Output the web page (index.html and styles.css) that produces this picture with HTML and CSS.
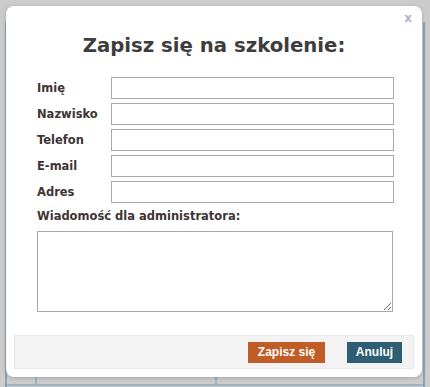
FILE: index.html
```html
<!DOCTYPE html>
<html lang="pl">
<head>
  <meta charset="UTF-8" />
  <title>Zapisz się na szkolenie</title>
  <meta name="viewport" content="width=device-width, initial-scale=1.0" />
  <link rel="stylesheet" href="styles.css">
</head>
<body>
  <div class="frame">
    <div class="table-row">
      <div class="cell"></div>
      <div class="cell"></div>
      <div class="cell"></div>
    </div>
  </div>

  <div class="modal">
    <span class="close">x</span>
    <h1>Zapisz się na szkolenie:</h1>
    <form id="signupForm">
      <div class="row">
        <label for="name">Imię</label>
        <input type="text" id="name" autofocus />
      </div>
      <div class="row">
        <label for="surname">Nazwisko</label>
        <input type="text" id="surname" />
      </div>
      <div class="row">
        <label for="phone">Telefon</label>
        <input type="text" id="phone" />
      </div>
      <div class="row">
        <label for="email">E-mail</label>
        <input type="text" id="email" />
      </div>
      <div class="row">
        <label for="address">Adres</label>
        <input type="text" id="address" />
      </div>
      <label for="message" class="wide">Wiadomość dla administratora:</label>
      <textarea id="message"></textarea>
    </form>
    <div class="footer">
      <button type="submit" form="signupForm" class="save">Zapisz się</button>
      <button type="button" class="cancel">Anuluj</button>
    </div>
  </div>
</body>
</html>
```

FILE: styles.css
```css
body {
  margin: 0;
  background: #cccccc;
  font-family: "DejaVu Sans", Verdana, sans-serif;
  overflow: hidden;
}

.frame {
  margin: 22px 0 0 5px;
  width: 416px;
  height: 365px;
  border-left: 2px solid #87a3b8;
  border-right: 2px solid #87a3b8;
  display: flex;
  flex-direction: column;
  justify-content: flex-end;
}

.table-row {
  display: grid;
  grid-template-columns: 30px 180px 1fr;
  height: 7px;
  border-bottom: 2px solid #9ab4c2;
  margin-bottom: 1px;
}

.cell {
  border-right: 2px solid #9ab4c2;
}

.cell:last-child {
  border-right: none;
}

.modal {
  position: absolute;
  left: 6px;
  top: 6px;
  width: 416px;
  height: 371px;
  box-sizing: border-box;
  background: #ffffff;
  border-radius: 8px;
  box-shadow: 0 1px 4px rgba(0, 0, 0, 0.18);
  padding-top: 28px;
}

.close {
  position: absolute;
  top: 5px;
  right: 10px;
  font-size: 12px;
  font-weight: bold;
  color: #aeb6bf;
  cursor: pointer;
}

h1 {
  margin: 0 0 19px;
  font-size: 19.7px;
  line-height: 24px;
  text-align: center;
  color: #3d3d3d;
}

form {
  padding-left: 31px;
}

.row {
  display: flex;
  align-items: center;
  margin-bottom: 4px;
}

label {
  font-size: 11.5px;
  font-weight: bold;
  color: #3d3434;
  line-height: 14px;
}

.row label {
  width: 74px;
}

input[type="text"] {
  width: 283px;
  height: 22px;
  box-sizing: border-box;
  border: 1px solid #a9a9a9;
  padding: 2px 4px;
  margin: 0;
  font-family: inherit;
  font-size: 12px;
  outline: none;
}

.wide {
  display: block;
  margin-top: 6px;
  margin-bottom: 8px;
}

textarea {
  display: block;
  width: 356px;
  height: 81px;
  box-sizing: border-box;
  border: 1px solid #a9a9a9;
  margin: 0;
  font-family: inherit;
  resize: both;
}

.footer {
  margin: 23px 8px 0;
  height: 34px;
  box-sizing: border-box;
  background: #f3f3f3;
  border: 1px solid #e9e9e9;
  display: flex;
  justify-content: flex-end;
  align-items: center;
  gap: 22px;
  padding-right: 11px;
}

button {
  height: 21px;
  border: none;
  color: #ffffff;
  font-family: "Liberation Sans", Arial, sans-serif;
  font-size: 12px;
  font-weight: bold;
  cursor: pointer;
  padding: 0;
}

.save {
  width: 77px;
  background: #c05d26;
}

.cancel {
  width: 55px;
  background: #2e5e73;
}
```
